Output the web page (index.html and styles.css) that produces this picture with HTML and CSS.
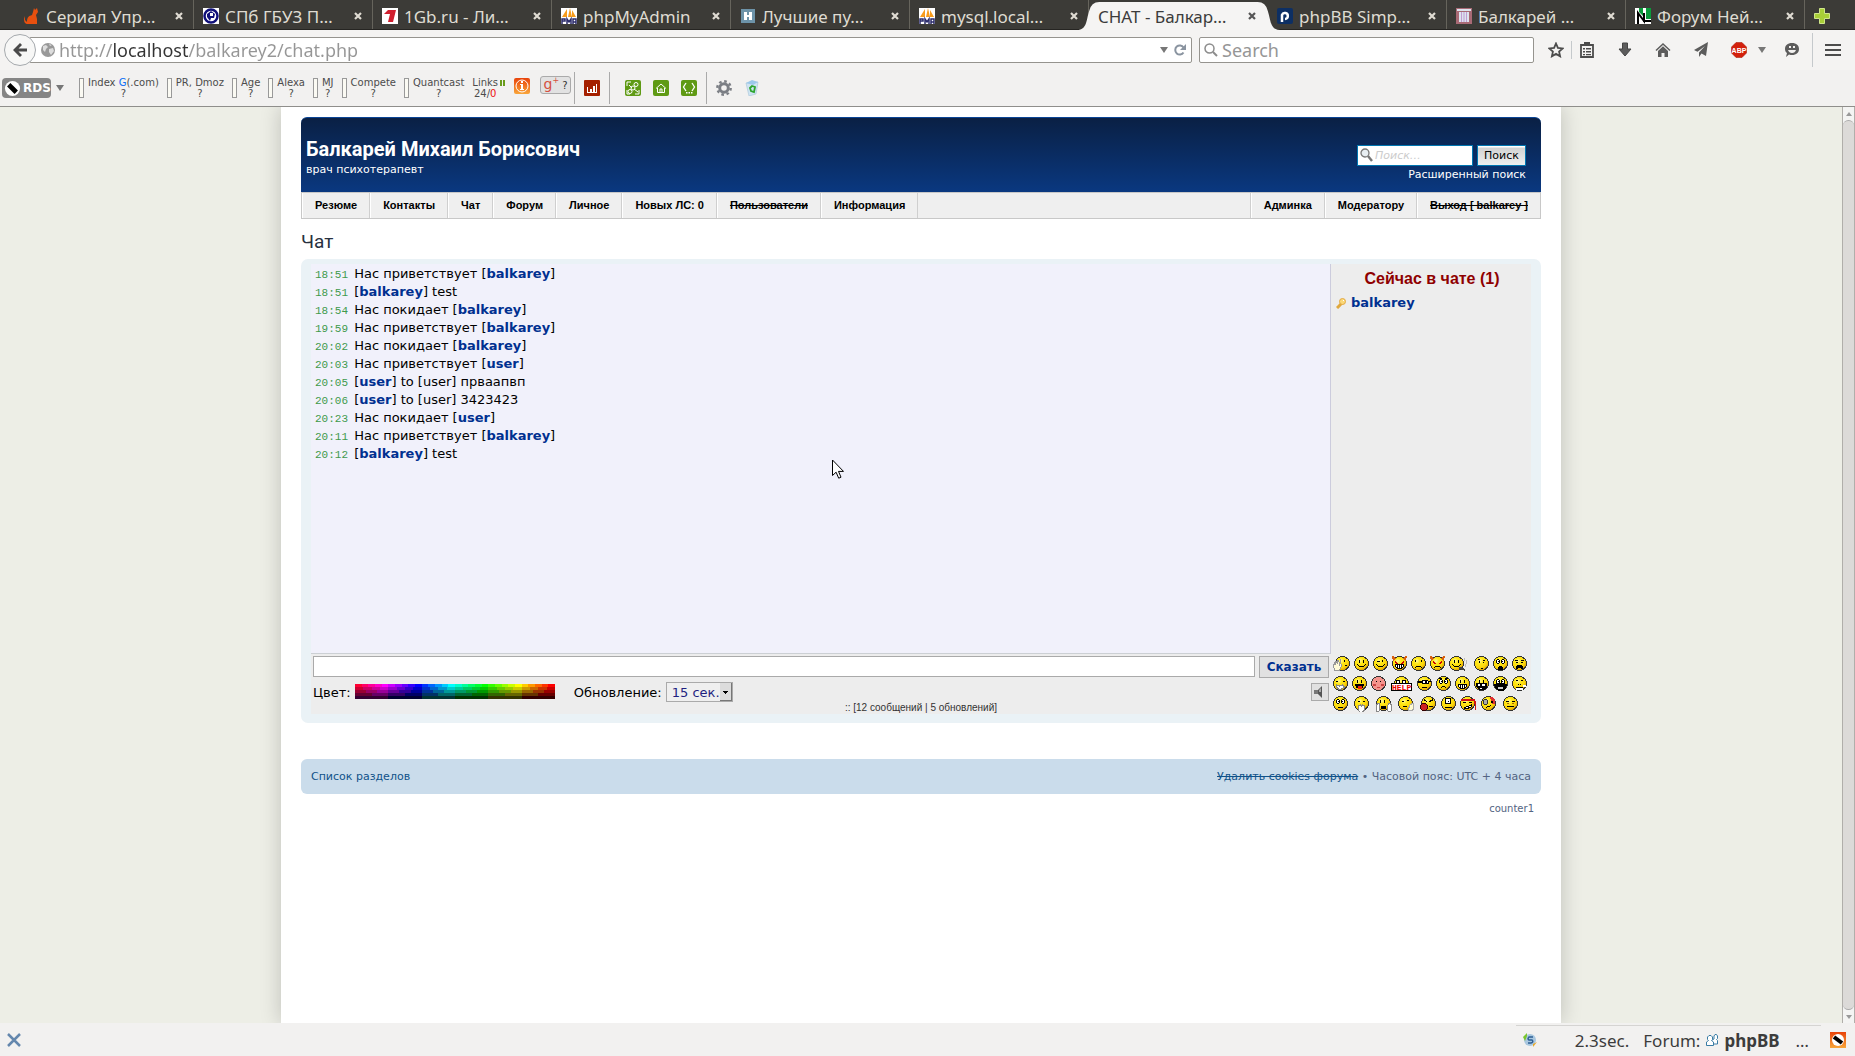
FILE: index.html
```
<!DOCTYPE html>
<html lang="ru">
<head>
<meta charset="UTF-8" />
<meta name="viewport" content="width=device-width, initial-scale=1" />
<title>CHAT - Балкарей Михаил Борисович</title>
<link rel="stylesheet" href="styles.css">
</head>
<body>

<!-- shared shapes -->
<svg class="defs" width="0" height="0" aria-hidden="true">
  <defs>
    <radialGradient id="gold" cx="38%" cy="30%" r="75%">
      <stop offset="0" stop-color="#fff9a0" /><stop offset=".3" stop-color="#ffe818" />
      <stop offset=".7" stop-color="#fbd60a" /><stop offset="1" stop-color="#d89a00" />
    </radialGradient>
    <linearGradient id="fire" x2="0" y2="1"><stop offset="0" stop-color="#e8430a" /><stop offset="1" stop-color="#f9a63a" /></linearGradient>
    <symbol id="face" viewBox="0 0 15 15"><path fill="#333" d="M5 0h5v1h2v1h1v1h1v2h1v5h-1v2h-1v1h-1v1h-2v1H5v-1H3v-1H2v-1H1v-2H0V5h1V3h1V2h1V1h2z" /><circle cx="7.500" cy="7.500" r="6.500" fill="url(#gold)" /></symbol>
    <symbol id="pma" viewBox="0 0 16 16"><path fill="#fff" d="M0 0h16v16H0z" /><path fill="#f89c1c" d="M1 9L6 1v8zM7 9L9 0l2 9zM11 9l0-7 4 7z" /><path fill="none" stroke="#2b2b6b" stroke-width="1.500" d="M1 16v-5h3v2H1M6 16v-5l2 3 2-3v5M12 16v-5h3v5M12 14h3" /></symbol>
    <symbol id="close" viewBox="0 0 8 8"><path stroke="currentColor" stroke-width="2.200" d="M1 1l6 6M7 1L1 7" /></symbol>
  </defs>
</svg>

<nav class="tabs" aria-label="Вкладки">
  <div class="tab"><svg class="fav" viewBox="0 0 16 16"><path fill="#e8500f" d="M10 0l1 2 2-2 1 4-2 3 1 4v5H4c-3 0-4-2-4-5l1-3v4l2 2c0-5 2-6 5-7l1-3z" /></svg><a href="#">Сериал Упр…</a><button aria-label="Закрыть"><svg><use href="#close" /></svg></button></div>
  <div class="tab"><svg class="fav" viewBox="0 0 16 16"><path fill="#fff" d="M0 0h16v16H0z" /><circle cx="8" cy="8" r="6.500" fill="#fff" stroke="#10107a" stroke-width="2.500" /><path fill="#10107a" d="M4 6l4-3 4 3-1 4H8l-1 3-3-4z" /><path fill="#fff" d="M7 5h3v3H7z" /></svg><a href="#">СПб ГБУЗ П…</a><button aria-label="Закрыть"><svg><use href="#close" /></svg></button></div>
  <div class="tab"><svg class="fav" viewBox="0 0 16 16"><path fill="#fff" d="M0 0h16v16H0z" /><path fill="#d01f2e" d="M6 2h8l-3 12H6l2-8H2z" /></svg><a href="#">1Gb.ru - Ли…</a><button aria-label="Закрыть"><svg><use href="#close" /></svg></button></div>
  <div class="tab"><svg class="fav"><use href="#pma" /></svg><a href="#">phpMyAdmin</a><button aria-label="Закрыть"><svg><use href="#close" /></svg></button></div>
  <div class="tab"><svg class="fav" viewBox="0 0 16 16"><path fill="#6d93a8" d="M1 1h14v14H1z" /><path fill="#fff" d="M4 4h3v3h2V4h3v8H9V9H7v3H4z" /></svg><a href="#">Лучшие пу…</a><button aria-label="Закрыть"><svg><use href="#close" /></svg></button></div>
  <div class="tab"><svg class="fav"><use href="#pma" /></svg><a href="#">mysql.local…</a><button aria-label="Закрыть"><svg><use href="#close" /></svg></button></div>
  <div class="tab active"><svg class="shape" viewBox="0 0 200 28" preserveAspectRatio="none"><path d="M0 28C10 28 9 18 12 9Q14 0 22 0H178Q186 0 188 9C191 18 190 28 200 28z" /></svg><a href="#">CHAT - Балкар…</a><button aria-label="Закрыть"><svg><use href="#close" /></svg></button></div>
  <div class="tab"><svg class="fav" viewBox="0 0 16 16"><rect width="16" height="16" rx="2" fill="#0d2f63" /><path fill="none" stroke="#fff" stroke-width="2.500" d="M5 14V7a3 3 0 1 1 3 4" /></svg><a href="#">phpBB Simp…</a><button aria-label="Закрыть"><svg><use href="#close" /></svg></button></div>
  <div class="tab"><svg class="fav" viewBox="0 0 16 16"><path fill="#a86a75" d="M0 0h16v16H0z" /><path fill="#dde3ee" d="M3 4h10v10H3zM1 1h14v2H1z" /><path stroke="#93a" stroke-opacity=".4" d="M5.500 4v10M8 4v10M10.500 4v10" /></svg><a href="#">Балкарей …</a><button aria-label="Закрыть"><svg><use href="#close" /></svg></button></div>
  <div class="tab last"><svg class="fav" viewBox="0 0 16 16"><path fill="#fff" d="M0 0h16v16H0z" /><path fill="#0a9a3a" d="M4 0h4v8L4 4zM11 0h5v11h-5z" /><path fill="none" stroke="#000" stroke-width="2" d="M3 16V5l6 8V5v8h7" /></svg><a href="#">Форум Ней…</a><button aria-label="Закрыть"><svg><use href="#close" /></svg></button></div>
  <button class="new-tab" aria-label="Новая вкладка"><svg viewBox="0 0 16 16"><path fill="#a9cf38" stroke="#cfe68a" d="M5.500.5h5v5h5v5h-5v5h-5v-5h-5v-5h5z" /></svg></button>
</nav>

<header class="navbar">
  <button class="back" aria-label="Назад"><svg viewBox="0 0 14 14"><path fill="#4a4a4a" d="M7 0l2 2-3.500 3.500H14v3H5.500L9 12l-2 2-7-7z" /></svg></button>
  <div class="urlbar">
    <svg class="globe" viewBox="0 0 14 14"><circle cx="7" cy="7" r="7" fill="#999" /><path fill="#ddd" d="M2 3l3-1 2 2-2 2-1 3-2-2zM8 6l4-1 1 3-3 4-2-3zM8 1l3 1-2 1z" /></svg>
    <input type="text" aria-label="Адрес" value="http://localhost/balkarey2/chat.php" />
    <svg class="arrow" viewBox="0 0 8 6"><path d="M0 0h8L4 6z" /></svg>
    <svg class="reload" viewBox="0 0 12 12"><path fill="none" stroke="#8a94a0" stroke-width="2" d="M9.500 8.500a4.500 4.500 0 1 1 0-5" /><path fill="#8a94a0" d="M12 0v6H6z" /></svg>
  </div>
  <label class="websearch">
    <svg viewBox="0 0 14 14"><circle cx="5.500" cy="5.500" r="4.500" fill="none" stroke="#8c8c8c" stroke-width="1.500" /><path stroke="#8c8c8c" stroke-width="2" d="M9 9l4 4" /></svg>
    <input type="text" placeholder="Search" aria-label="Search" />
  </label>
  <div class="nav-icons">
    <button aria-label="Закладка"><svg viewBox="0 0 16 16"><path fill="none" stroke="#4c4c4c" stroke-width="1.800" d="M8 1.500l1.900 4.400 4.800.5-3.600 3.200 1 4.700L8 11.900l-4.100 2.400 1-4.700L1.300 6.400l4.800-.5z" /></svg></button>
    <i class="sep"></i>
    <button aria-label="Закладки"><svg viewBox="0 0 16 16"><path fill="none" stroke="#4c4c4c" stroke-width="1.800" d="M2 3h12v12H2z" /><path fill="#4c4c4c" d="M5 0h6v4H5zM4 6h2v1.500H4zM7 6h5v1.500H7zM4 9h2v1.500H4zM7 9h5v1.500H7zM4 12h2v1.300H4zM7 12h5v1.300H7z" /></svg></button>
    <button aria-label="Загрузки"><svg viewBox="0 0 16 16"><path fill="#5c5c5c" stroke="#444" d="M5.500 1h5v6H14l-6 7-6-7h3.500z" /></svg></button>
    <button aria-label="Домой"><svg viewBox="0 0 16 16"><path fill="none" stroke="#5c5c5c" stroke-width="1.500" d="M1 8.500L8 2l7 6.500" /><path fill="#5c5c5c" d="M3 9l5-4.700L13 9v6h-3.500v-4h-3v4H3z" /></svg></button>
    <button aria-label="Поделиться"><svg viewBox="0 0 16 16"><path fill="#5c5c5c" d="M15 0l-2 14-4.500-2.500L6 15v-4.500L12 4 4.500 9.800 1 8z" /></svg></button>
    <button class="abp" aria-label="Adblock Plus"><svg viewBox="0 0 16 16"><path fill="#d3200c" stroke="#a01000" stroke-width=".5" d="M5 .5h6L15.500 5v6L11 15.500H5L.5 11V5z" /><text x="8" y="10.500" text-anchor="middle">ABP</text></svg></button>
    <svg class="arrow" viewBox="0 0 8 6"><path d="M0 0h8L4 6z" /></svg>
    <button aria-label="Чат"><svg viewBox="0 0 16 16"><path fill="#5c5c5c" d="M8 1c4.500 0 7 2.500 7 6s-2.500 6-7 6c-1 0-2 0-3-.5L2 15l1-4C1.500 10 1 8.500 1 7c0-3.500 2.500-6 7-6z" /><path fill="#f2f1f0" d="M5 4h2v2H5zM9 4h2v2H9zM4 8h8q-1 3-4 3T4 8z" /></svg></button>
    <i class="sep tall"></i>
    <button aria-label="Меню"><svg viewBox="0 0 16 16"><path fill="#4c4c4c" d="M0 2h16v2H0zM0 7h16v2H0zM0 12h16v2H0z" /></svg></button>
  </div>
</header>

<section class="rdsbar">
  <button class="rds"><svg viewBox="0 0 18 18"><circle cx="9" cy="9" r="8" fill="#fff" /><path stroke="#000" stroke-width="5" d="M5 5l8 8" /></svg>RDS</button>
  <svg class="arrow" viewBox="0 0 8 6"><path d="M0 0h8L4 6z" /></svg>
  <div class="metrics">
    <div class="metric"><i></i><span>Index <b>G</b>(.com)<br>?</span></div>
    <div class="metric"><i></i><span>PR, Dmoz<br>?</span></div>
    <div class="metric"><i></i><span>Age<br>?</span></div>
    <div class="metric"><i></i><span>Alexa<br>?</span></div>
    <div class="metric"><i></i><span>MJ<br>?</span></div>
    <div class="metric"><i></i><span>Compete<br>?</span></div>
    <div class="metric"><i></i><span>Quantcast<br>?</span></div>
    <div class="metric"><span>Links<br>24/<em>0</em></span><svg class="pause" viewBox="0 0 5 6"><path fill="#6a9c1c" d="M0 0h2v6H0zM3 0h2v6H3z" /></svg></div>
  </div>
  <svg class="info" viewBox="0 0 16 16"><rect width="16" height="16" rx="2" fill="url(#fire)" /><circle cx="8" cy="8" r="6" fill="none" stroke="#fff" /><path fill="#fff" d="M7 3h2v2H7zM6 6h3v5h1v1H6v-1h1V7H6z" /></svg>
  <button class="gplus"><b>g<sup>+</sup></b> ?</button>
  <i class="sep"></i>
  <svg class="tool chart" viewBox="0 0 16 16"><rect width="16" height="16" rx="1" fill="#a52000" /><path fill="#fff" d="M3 7h1v5h2V9h2v3h1V6h2v6h1V4h1v9H3z" /></svg>
  <i class="sep"></i>
  <div class="tools">
    <svg class="tool" viewBox="0 0 16 16"><rect width="16" height="16" rx="2" fill="#5f9a14" /><path fill="none" stroke="#fff" d="M2 6V2h4M14 10v4h-4M2 10v4h3M4 5l3 3M9 9l4 3" /><circle cx="11" cy="4.500" r="2" fill="none" stroke="#fff" /><circle cx="8" cy="8" r="2" fill="none" stroke="#fff" /><circle cx="5" cy="11.500" r="2" fill="none" stroke="#fff" /></svg>
    <svg class="tool" viewBox="0 0 16 16"><rect width="16" height="16" rx="2" fill="#5f9a14" /><path fill="none" stroke="#fff" d="M3 8.500L8 4l5 4.500M4.500 8v4.500h7V8M7 12V9h2v3" /></svg>
    <svg class="tool" viewBox="0 0 16 16"><rect width="16" height="16" rx="2" fill="#5f9a14" /><path fill="none" stroke="#fff" stroke-width="1.300" d="M5 3L2.500 7 5 11M11 3l2.500 4L11 11" /><path fill="#fff" d="M5 12h1.500v1.500H5zM7.500 12H9v1.500H7.500zM10 12h1.500v1.500H10z" /></svg>
  </div>
  <i class="sep"></i>
  <div class="tools">
    <svg class="tool" viewBox="0 0 16 16"><circle cx="8" cy="8" r="4.300" fill="none" stroke="#7b7e84" stroke-width="3" /><circle cx="8" cy="8" r="6.700" fill="none" stroke="#7b7e84" stroke-width="2.400" stroke-dasharray="2.600 2.660" /></svg>
    <svg class="tool" viewBox="0 0 16 16"><path fill="#cfe4f2" stroke="#a5c3d6" stroke-width=".6" d="M2 3l12-1-2 12-7 2z" /><path fill="#9cc8ea" d="M2 3l6-3 6 2-5 3z" /><path fill="none" stroke="#2da52d" stroke-width="1.800" d="M6 8l2-2 3 1-1 5-3-1z" /></svg>
  </div>
</section>

<div class="viewport">
  <div class="scroll-area">
    <main class="page">
      <div class="headerbar">
        <div class="site">
          <h1>Балкарей Михаил Борисович</h1>
          <p>врач психотерапевт</p>
        </div>
        <form class="search">
          <div class="search-row">
            <input type="text" placeholder="Поиск…" aria-label="Поиск" />
            <svg class="lens" viewBox="0 0 13 14"><circle cx="5" cy="5" r="4" fill="#e8eef2" stroke="#777" stroke-width="1.300" /><path stroke="#777" stroke-width="2.400" d="M8 8l4 5" /></svg>
            <button type="button">Поиск</button>
          </div>
          <a href="#">Расширенный поиск</a>
        </form>
      </div>
      <nav class="menu">
        <a href="#">Резюме</a><a href="#">Контакты</a><a href="#">Чат</a><a href="#">Форум</a><a href="#">Личное</a><a href="#">Новых ЛС: 0</a><a href="#" class="off">Пользователи</a><a href="#">Информация</a>
        <span class="fill"></span>
        <a href="#">Админка</a><a href="#">Модератору</a><a href="#" class="off">Выход [ balkarey ]</a>
      </nav>

      <h2>Чат</h2>
      <section class="panel">
        <div class="chat">
          <div class="left">
            <div class="log">
              <p><time>18:51</time> Нас приветствует [<b>balkarey</b>]</p>
              <p><time>18:51</time> [<b>balkarey</b>] test</p>
              <p><time>18:54</time> Нас покидает [<b>balkarey</b>]</p>
              <p><time>19:59</time> Нас приветствует [<b>balkarey</b>]</p>
              <p><time>20:02</time> Нас покидает [<b>balkarey</b>]</p>
              <p><time>20:03</time> Нас приветствует [<b>user</b>]</p>
              <p><time>20:05</time> [<b>user</b>] to [user] прваапвп</p>
              <p><time>20:06</time> [<b>user</b>] to [user] 3423423</p>
              <p><time>20:23</time> Нас покидает [<b>user</b>]</p>
              <p><time>20:11</time> Нас приветствует [<b>balkarey</b>]</p>
              <p><time>20:12</time> [<b>balkarey</b>] test</p>
            </div>
            <form class="say">
              <div class="say-row">
                <input type="text" aria-label="Сообщение" />
                <button type="button">Сказать</button>
              </div>
              <div class="options">
                <span>Цвет:</span>
                <svg id="palette" viewBox="0 0 200 15" role="img" aria-label="Палитра"></svg>
                <label for="refresh">Обновление:</label>
                <select id="refresh"><option>15 сек.</option><option>30 сек.</option></select>
                <button type="button" class="sound" aria-label="Звук"><svg viewBox="0 0 12 12"><path fill="#777" d="M0 4h4v4H0z" /><path fill="#555" d="M4 4l4-4v12L4 8z" /><path fill="#aaa" d="M5 4l2-2v4H5z" /></svg></button>
              </div>
              <p class="stat">:: [12 сообщений | 5 обновлений]</p>
            </form>
          </div>
          <aside class="right">
            <h3>Сейчас в чате (1)</h3>
            <p class="who"><svg viewBox="0 0 10 11"><path stroke="#e0a83c" stroke-width="3" d="M6 5L1 10" /><circle cx="6.500" cy="3.500" r="3" fill="#fad878" stroke="#e3a945" /><path fill="#fff" d="M7 2h1v1H7z" /></svg><a href="#">balkarey</a></p>
            <div class="smiles" id="smiles"></div>
          </aside>
        </div>
      </section>

      <footer class="footer">
        <a href="#">Список разделов</a>
        <span><a href="#" class="off">Удалить cookies форума</a> • Часовой пояс: UTC + 4 часа</span>
      </footer>
      <p class="counter">counter1</p>
    </main>
  </div>
  <div class="scrollbar"><button aria-label="Вверх"><svg viewBox="0 0 6 4"><path d="M0 4h6L3 0z" /></svg></button><i></i><button class="down" aria-label="Вниз"><svg viewBox="0 0 6 4"><path d="M0 0h6L3 4z" /></svg></button></div>
</div>

<footer class="statusbar">
  <button aria-label="Закрыть панель"><svg viewBox="0 0 14 14"><path stroke="#6487ad" stroke-width="2.500" d="M1 1l12 12M13 1L1 13" /></svg></button>
  <div class="addons">
    <svg class="ball" viewBox="0 0 14 14"><circle cx="7" cy="7" r="6" fill="#a9c7df" /><path fill="none" stroke="#2d5f94" stroke-width="1.500" d="M10 4H6q-2 2 0 3h3q2 2-1 3H5" /><path fill="#7ac52e" d="M0 4l4-4v3L2 8z" /><path fill="#e8a928" d="M14 9l-4 5v-3z" /></svg>
    <span>2.3sec.</span>
    <span class="forum">Forum: <svg viewBox="0 0 12 12"><path fill="#fff" stroke="#3a7ca5" d="M6 6l2-1V2l1-1.500h1.500l1 1.500v2.500l-1 1 1 1V10H8" /><path fill="#fff" stroke="#3a7ca5" d="M.5 11.500V8l2-1.500-1-1V3L3 1.500h2L6.500 3v2.500l-1 1L7.500 8v3.500z" /></svg> <b>phpBB</b></span>
    <span>…</span>
  </div>
  <svg class="rdsmini" viewBox="0 0 16 16"><path fill="url(#fire)" d="M0 0h16v16H0z" /><circle cx="8" cy="8" r="6" fill="#fff" /><path stroke="#000" stroke-width="4" d="M4 5l8 6" /></svg>
</footer>

<svg class="cursor" viewBox="0 0 12 20"><path fill="#fff" stroke="#000" d="M.5 1v15.500l3.600-3.300 2.600 6 2.300-1-2.500-5.800h5z" /></svg>

<script src="script.js"></script>
</body>
</html>
```

FILE: styles.css
```
* {
  box-sizing: border-box;
}
body {
  margin: 0;
  height: 100vh;
  display: flex;
  flex-direction: column;
  overflow: hidden;
  font-family: "DejaVu Sans", sans-serif;
  font-size: 13px;
  background: #f2f1f0;
}
h1, h2, h3, p {
  margin: 0;
  font-weight: normal;
}
a {
  text-decoration: none;
  color: inherit;
}
button {
  padding: 0;
  border: none;
  background: none;
  font-family: inherit;
}
svg {
  display: block;
  flex: none;
}
.defs {
  position: absolute;
}
.off {
  text-decoration: line-through;
}

/* tabs */
.tabs {
  display: flex;
  height: 30px;
  padding-left: 15px;
  background: #3c3b37;
  border-bottom: 1px solid #262522;
  font-family: "Noto Sans", sans-serif;
  font-size: 17px;
  color: #dfdbd2;
}
.tab {
  position: relative;
  display: flex;
  align-items: center;
  flex: 0 1 179px;
  min-width: 0;
  padding: 3px 10px 0 9px;
  border-right: 1px solid #66645c;
}
.tab a {
  flex: 1;
  white-space: nowrap;
  overflow: hidden;
}
.tab button {
  color: #dfdbd2;
}
.tab button svg {
  width: 8px;
  height: 8px;
}
.fav {
  width: 16px;
  height: 16px;
  margin-right: 6px;
}
.tab.active {
  color: #3c3c3c;
  border: none;
}
.tab.active a, .tab.active button {
  position: relative;
}
.tab.active button {
  color: #555;
  margin-right: 2px;
}
.shape {
  position: absolute;
  left: -12px;
  top: 2px;
  width: 203px;
  height: 28px;
  fill: #f5f4f3;
}
.new-tab {
  margin: 2px 0 0 9px;
}
.new-tab svg {
  width: 16px;
  height: 16px;
}

/* address row */
.navbar {
  display: flex;
  align-items: center;
  height: 40px;
  padding: 0 13px 0 4px;
  background: #f4f3f2;
  font-family: "Noto Sans", sans-serif;
}
.back {
  position: relative;
  width: 32px;
  height: 32px;
  margin-right: -7px;
  border: 1px solid #a5a9ad;
  border-radius: 50%;
  background: #f7f7f6;
}
.back svg {
  width: 14px;
  height: 14px;
  margin: auto;
}
.urlbar, .websearch {
  display: flex;
  align-items: center;
  height: 26px;
  border: 1px solid #96948f;
  border-radius: 2px;
  background: #fff;
}
.urlbar {
  flex: 1;
  padding: 0 5px 0 11px;
  margin-right: 7px;
}
.urlbar input, .websearch input {
  flex: 1;
  min-width: 0;
  border: none;
  outline: none;
  padding: 0;
  font-family: inherit;
  font-size: 18px;
  line-height: 24px;
  color: #969696;
}
.urlbar input {
  margin-left: 4px;
  background: linear-gradient(90deg, #969696 53px, #333 53px, #333 129px, #969696 129px);
  background-clip: text;
  -webkit-background-clip: text;
  color: transparent;
}
.websearch input::placeholder {
  color: #969696;
}
.globe, .websearch svg {
  width: 14px;
  height: 14px;
}
.arrow {
  width: 8px;
  height: 6px;
  fill: #777;
}
.reload {
  width: 12px;
  height: 12px;
  margin-left: 6px;
}
.websearch {
  flex: 0 1 335px;
  padding: 0 4px;
}
.websearch input {
  margin-left: 4px;
}
.nav-icons {
  display: flex;
  align-items: center;
  gap: 22px;
  margin-left: 14px;
  padding-right: 1px;
}
.nav-icons button svg {
  width: 16px;
  height: 16px;
}
.nav-icons .arrow {
  margin: 0 -4px 0 -11px;
}
.sep {
  width: 1px;
  height: 18px;
  margin: 0 -15px;
  background: #c5c9cc;
}
.sep.tall {
  height: 34px;
  margin: 0 -10px;
}
.abp text {
  font: bold 7px "Liberation Sans", sans-serif;
  fill: #fff;
}

/* seo toolbar */
.rdsbar {
  display: flex;
  align-items: center;
  height: 37px;
  padding-left: 2px;
  border-bottom: 1px solid #8f8e8b;
  font-size: 10px;
  line-height: 11px;
  color: #4c4c4c;
}
.rds {
  display: flex;
  align-items: center;
  width: 49px;
  height: 20px;
  padding: 0 2px;
  gap: 2px;
  border-radius: 4px;
  background: #858585;
  color: #fff;
  font-size: 12px;
  font-weight: bold;
}
.rds svg {
  width: 17px;
  height: 17px;
}
.rdsbar .arrow {
  margin: 0 15px 0 5px;
}
.metrics {
  display: flex;
  gap: 8px;
}
.metric {
  display: flex;
  gap: 4px;
  text-align: center;
}
.metric i {
  width: 5px;
  height: 20px;
  margin-top: 1px;
  border: 1px solid #999;
  background: #fbfaf3;
}
.metric b {
  font-weight: normal;
  color: #0a6cf5;
}
.metric em {
  font-style: normal;
  color: #e11;
}
.pause {
  width: 5px;
  height: 6px;
  margin: 3px 0 0 -2px;
}
.info {
  width: 16px;
  height: 16px;
  margin: 0 10px 5px 9px;
}
.gplus {
  width: 31px;
  height: 18px;
  margin: 0 3px 7px 0;
  border: 1px solid #aaa;
  border-radius: 3px;
  background: #e2e2e2;
  font-size: 10px;
  line-height: 14px;
  color: #333;
  white-space: nowrap;
}
.gplus b {
  font-size: 14px;
  font-weight: normal;
  color: #d5503f;
}
.gplus sup {
  font-size: 8px;
  line-height: 8px;
}
.rdsbar .sep {
  height: 32px;
  margin: 0;
  background: #aaa;
}
.tool {
  width: 16px;
  height: 16px;
}
.chart {
  margin: 0 9px;
}
.tools {
  display: flex;
  gap: 12px;
  margin: 0 9px 0 15px;
}
.sep + .tools:last-child {
  margin-left: 9px;
}

/* page */
.viewport {
  flex: 1;
  display: flex;
  min-height: 0;
}
.scroll-area {
  flex: 1;
  overflow: hidden;
  background: #edeee6;
}
.page {
  max-width: 1280px;
  min-height: 100%;
  margin: 0 auto;
  padding: 10px 20px;
  background: #fff;
  box-shadow: 0 0 20px rgba(0, 0, 0, 0.2);
}
.headerbar {
  display: flex;
  justify-content: space-between;
  height: 75px;
  padding: 19px 15px 0 5px;
  border-top: 1px solid #0a4596;
  border-radius: 6px 6px 0 0;
  background: linear-gradient(#0a2044, #0a3880);
  color: #fff;
}
h1 {
  font: bold 20px/25px Roboto, sans-serif;
}
.site p {
  font-size: 11px;
  line-height: 16px;
}
.search {
  display: flex;
  flex-direction: column;
  align-items: flex-end;
  padding-top: 8px;
  font-size: 11px;
  line-height: 18px;
}
.search-row {
  position: relative;
  display: flex;
  gap: 4px;
}
.search input {
  width: 116px;
  height: 21px;
  padding: 0 4px 0 17px;
  border: 1px solid #0076b1;
  font: 11px "DejaVu Sans", sans-serif;
}
.search input::placeholder {
  color: #ccc;
  font-style: italic;
}
.lens {
  position: absolute;
  left: 3px;
  top: 3px;
  width: 13px;
  height: 14px;
}
.search button {
  width: 49px;
  height: 21px;
  border: 1px solid #0076b1;
  background: linear-gradient(#fff 1px, #d2d2d2 2px, #efefef);
  font-size: 11px;
}
.menu {
  display: flex;
  height: 27px;
  border: 1px solid #c8c8c8;
  background: #efefef;
  font: bold 11px/25px "Liberation Sans", sans-serif;
}
.menu a {
  padding: 0 12px;
  border-right: 1px solid #cfcfcf;
  border-left: 1px solid #fff;
}
.menu .fill {
  flex: 1;
  border-right: 1px solid #cfcfcf;
}
.menu a:last-child {
  border-right: none;
}
h2 {
  margin: 11px 0 5px;
  font: 19px/24px Roboto, sans-serif;
  color: #28313f;
}
.panel {
  padding: 5px 10px 9px;
  border-radius: 7px;
  background: #eaf2f6;
}
.chat {
  display: flex;
  background: #ededed;
}
.left {
  flex: 1;
}
.log {
  height: 390px;
  padding: 1px 4px;
  border-right: 1px solid #ccd;
  border-bottom: 1px solid #ccd0d4;
  background: #f1f1fb;
  line-height: 18px;
}
.log b, .who a {
  font-weight: bold;
  color: #003090;
}
.log time {
  margin-right: 2px;
  font: 11px "Liberation Mono", monospace;
  color: #3f9a4c;
}
.say {
  padding: 2px 2px 0;
}
.say-row {
  display: flex;
  gap: 4px;
}
.say-row input {
  flex: 1;
  height: 21px;
  border: 1px solid #aaa;
}
.say-row button {
  width: 70px;
  height: 22px;
  border: 1px solid #aaa;
  background: #e1e1e1;
  font-size: 12px;
  font-weight: bold;
  color: #003090;
}
.options {
  display: flex;
  align-items: center;
  height: 20px;
  margin-top: 4px;
}
#palette {
  width: 200px;
  height: 15px;
  margin: 0 19px 2px 4px;
}
.options select {
  width: 67px;
  height: 20px;
  margin-left: 4px;
  padding: 0 12px 0 5px;
  appearance: none;
  border: 1px solid #aaa;
  background: linear-gradient(#000, #000) no-repeat right 4px top 8px/5px 1px, linear-gradient(#000, #000) no-repeat right 5px top 9px/3px 1px, linear-gradient(#000, #000) no-repeat right 6px top 10px/1px 1px, linear-gradient(#777, #777) no-repeat right/1px 100%, linear-gradient(#777, #777) no-repeat right bottom/12px 1px, linear-gradient(#dcdcdc, #dcdcdc) no-repeat right/12px 100%, #efefef;
  font: 13px "DejaVu Sans", sans-serif;
  color: #1f1f80;
}
.sound {
  width: 18px;
  height: 18px;
  margin-left: auto;
  border: 1px solid #aaa;
  background: #e1e1e1;
}
.sound svg {
  width: 12px;
  height: 12px;
  margin: auto;
}
.stat {
  height: 12px;
  padding-left: 200px;
  font: 10px/12px "Liberation Sans", sans-serif;
  text-align: center;
  color: #333;
}
.right {
  display: flex;
  flex-direction: column;
  width: 200px;
  padding: 5px 0 0 2px;
}
h3 {
  font: bold 16px/20px "Liberation Sans", sans-serif;
  text-align: center;
  color: #8f0000;
}
.who {
  display: flex;
  align-items: center;
  gap: 5px;
  margin: 5px 0 0 3px;
  line-height: 18px;
}
.who svg {
  width: 10px;
  height: 11px;
}
.smiles {
  display: flex;
  flex-direction: column;
  gap: 4px;
  margin-top: auto;
  padding-bottom: 2px;
}
.smiles div {
  display: flex;
  gap: 4px;
}
.smiles svg {
  height: 16px;
  shape-rendering: crispEdges;
}
.smiles text {
  font: bold 8px "Liberation Mono", monospace;
  fill: #e00;
}
.footer {
  display: flex;
  justify-content: space-between;
  margin-top: 36px;
  padding: 1px 10px 0;
  border-radius: 6px;
  background: #cadceb;
  font-size: 11px;
  line-height: 34px;
  color: #536482;
}
.footer a {
  color: #105289;
}
.counter {
  padding: 7px 7px 0 0;
  font-size: 10px;
  line-height: 16px;
  text-align: right;
  color: #536482;
}

/* scrollbar */
.scrollbar {
  display: flex;
  flex-direction: column;
  width: 13px;
  border: solid #b0aeaa;
  border-width: 0 1px;
  background: #f4f4f3;
}
.scrollbar i {
  flex: 1;
  border: 1px solid #aaa;
  border-width: 1px 0;
  border-radius: 6px;
  background: #dcdad8;
}
.scrollbar button {
  height: 13px;
}
.scrollbar svg {
  width: 6px;
  height: 4px;
  margin: auto;
  fill: #999;
}

/* status bar */
.statusbar {
  display: flex;
  align-items: center;
  height: 33px;
  padding: 0 9px 0 7px;
  font: 17px "Noto Sans", sans-serif;
  color: #3c3c3c;
}
.statusbar button svg {
  width: 14px;
  height: 14px;
}
.addons {
  display: flex;
  align-items: center;
  gap: 14px;
  height: 29px;
  margin-left: auto;
  padding: 0 12px 0 7px;
  border-top: 1px solid #d5d4d2;
}
.ball {
  width: 14px;
  height: 14px;
  margin-right: 24px;
}
.forum {
  display: flex;
  align-items: center;
  gap: 6px;
  margin-right: 2px;
}
.forum svg {
  width: 12px;
  height: 12px;
}
.rdsmini {
  width: 16px;
  height: 16px;
  margin-left: 9px;
}
.cursor {
  position: absolute;
  left: 832px;
  top: 459px;
  width: 12px;
  height: 20px;
}
```

FILE: script.js
```
const palette = document.getElementById('palette');

// five rows of web colours, each darker and with fewer hues
for (let row = 0; row < 5; row++) {
  const light = (5 - row) * 10;
  const count = (5 - row) * 6;
  const w = 200 / count;
  for (let i = 0; i < count; i++) {
    const hue = 360 - (i + 1) * 360 / count;
    palette.innerHTML += `<rect x="${i * w}" y="${row * 3}" width="${w}" height="3" fill="hsl(${hue},100%,${light}%)" shape-rendering="crispEdges" />`;
  }
}

const eyes = '<path d="M5 4h1v3H5zM9 4h1v3H9z"/>';
const smile = '<path d="M3 8h1v1H3zM4 9h1v1H4zM5 10h5v1H5zM10 9h1v1h-1zM11 8h1v1h-1z"/>';
const sad = '<path d="M4 11h1v1H4zM5 10h5v1H5zM10 11h1v1h-1z"/>';
const round = '<path d="M4 3h2v1h1v3H6v1H4V7H3V4h1zM9 3h2v1h1v3h-1v1H9V7H8V4h1z"/><path fill="#fff" d="M4 4h2v3H4zM9 4h2v3H9z"/><path d="M5 5h1v1H5zM9 5h1v1H9z"/>';
const teeth = '<path d="M3 8h9v3h-1v1h-1v1H5v-1H4v-1H3z"/><path fill="#fff" d="M4 9h1v2H4zM6 9h1v3H6zM8 9h1v3H8zM10 9h1v2h-1z"/>';
const devil = '<path fill="#d86010" d="M0 0h2l2 3-3 2zM15 0h-2l-2 3 3 2z"/><path fill="#c00" d="M3 5h1v1h1v1h1v1H4V7H3zM12 5h-1v1h-1v1H9v1h2V7h1z"/>';
const hand = '<path fill="#fff" stroke="#888" d="M4.500 10l2-1 1 1 1-1 2 1v4l-2 2h-3l-1-2z"/>';

// width and drawing of every smile
const rows = [
  [
    [17, '<path fill="#fffbd8" stroke="#999" d="M1.500 14l-1-4 1-3 1 1V5h1l1 3V4h1l1 4 1-3 1 5-2 4z"/><path d="M11 4h1v2h-1zM12 9h2v1h-2z"/>', 2],
    [15, eyes + smile],
    [15, '<path d="M4 5h3v1H4zM9 4h1v2H9z"/>' + smile],
    [15, devil + teeth],
    [15, '<path d="M4 4h1v2H4zM10 4h1v2h-1z"/>' + sad],
    [15, devil + sad],
    [21, eyes + smile + '<path fill="#fff" stroke="#444" d="M10 11l5 2v1l-5-2z"/><path fill="#bbb" d="M15 2h1v3h-1zM17 4h1v4h-1zM16 8h1v3h-1z"/>'],
    [15, '<path d="M4 3h2v1H4zM5 5h1v2H5zM9 4h2v1H9zM9 6h1v1H9zM7 12h2v1H7z"/>'],
    [15, round + '<path d="M6 10h3v1h1v3H5v-3h1z"/>'],
    [15, '<path d="M3 4h3v1H3zM9 4h3v1H9zM4 6h2v1H4zM9 6h2v1H9zM5 9h5v1h1v3H9v-1H6v1H4v-3h1z"/>']
  ],
  [
    [15, '<path d="M3 5h2v1H3zM10 5h2v1h-2z"/><path fill="#fff" stroke="#888" d="M3.500 9l3 1 3-1 2 2-3 2h-3l-2-2z"/>'],
    [15, eyes + '<path d="M3 8h9v2h-1v2H9v1H6v-1H4v-2H3z"/><path fill="#e21" d="M6 10h4v3H6z"/>'],
    [15, '<circle cx="7.500" cy="7.500" r="6.500" fill="#f4938c"/><path fill="#c44" d="M2 8h3v2H2zM10 8h3v2h-3zM6 11h3v1H6z"/><path d="M5 5h1v1H5zM9 5h1v1H9z"/>'],
    [23, '<path d="M6 4h4v4H6zM12 4h4v4h-4z"/><path fill="#fff" d="M7 5h2v2H7zM13 5h2v2h-2z"/><path fill="#fff" stroke="#000" d="M1.500 7.500h20v7h-20z"/><text x="2" y="14">HELP</text>', 4],
    [15, '<path d="M1 5h4V4h6v1h3v1h-2v2H5V7H1z"/><path fill="#fff" d="M6 5h2v2H6zM10 5h1v2h-1z"/><path d="M5 11h5v1H5z"/>'],
    [15, round + '<path d="M6 10h3v1H6zM3 2h3v1H3zM9 2h3v1H9zM5 11h1v1H5zM9 11h1v1H9z"/>'],
    [15, eyes + teeth],
    [15, eyes + '<path d="M2 7h11v4l-3 3H5l-3-3z"/><path fill="#fff" d="M4 8h2v2H4zM8 8h3v2H8zM6 12h2v1H6z"/>'],
    [15, '<path d="M1 8l4-1h5l4 1-1 4-3 3H5l-3-3z"/>' + round + '<path fill="#ccc" d="M5 11h5v2H5z"/>'],
    [15, '<path d="M4 4h2v1H4zM9 4h2v1H9zM6 8h1v1H6zM8 8h1v1H8zM4 11h7v1H4z"/><path fill="#fff" d="M4 12h7v2H4zM11 9h3v2h-3z"/>']
  ],
  [
    [17, round + '<path d="M5 11h5v1H5z"/>'],
    [17, '<path d="M4 5h2v1H4zM9 5h2v1H9z"/>' + hand],
    [19, eyes + '<path fill="#fff" stroke="#888" d="M1 9l3-2 1 4-1 4H1zM17 9l-3-2-2 4 1 4h3z"/><path d="M6 10h5v3H6z"/>', 1],
    [18, '<path d="M4 5h2v1H4zM9 4h2v1H9zM5 10h4v1H5z"/><path fill="#fffbd0" stroke="#aaa" d="M12 9l3-2 1 5-2 3-4-1z"/>'],
    [17, '<path d="M4 3l3 2v1L4 5zM13 3l-4 2v1l4-1z"/><circle cx="4" cy="11" r="3.500" fill="#c22" stroke="#300"/><path d="M9 10h4v1H9z"/>', 1],
    [15, '<circle cx="7" cy="5" r="3" fill="#fff" stroke="#000"/><path d="M7 5h1v1H7zM4 11h7v1H4z"/>'],
    [17, '<path fill="#d31212" d="M1 3h14v2h1v9h-1V8h-1V5H1z"/><path d="M3 6h3v1H3zM9 6h3v1H9z"/><path fill="#fff" stroke="#000" d="M4 12l7-3v2l-5 2z"/>'],
    [18, '<path fill="#d33" d="M9 1h3l2 3v4h-3z"/><circle cx="4.500" cy="6" r="2.500" fill="#aaa" stroke="#333"/><path d="M10 5h2v2h-2zM5 11l5-2v1l-5 2z"/>'],
    [15, '<path d="M3 5h3v1H3zM9 5h3v1H9zM4 10h7v1H4z"/><path fill="#a60" d="M4 7h2v1H4zM9 7h2v1H9z"/>']
  ]
];

document.getElementById('smiles').innerHTML = rows.map(row => '<div>' + row.map(([w, art, x = 0]) =>
  `<button type="button" aria-label="Смайл"><svg width="${w}" viewBox="0 0 ${w} 16"><use href="#face" x="${x}" width="15" height="15" />${art}</svg></button>`
).join('') + '</div>').join('');
```
